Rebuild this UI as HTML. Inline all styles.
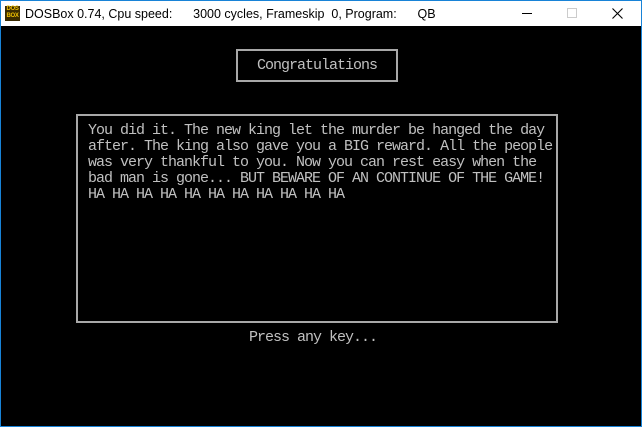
<!DOCTYPE html>
<html><head><meta charset="utf-8"><style>
body{margin:0;width:642px;height:427px;overflow:hidden;background:#000;position:relative;font-family:"Liberation Sans",sans-serif}
.tb{position:absolute;left:0;top:0;width:642px;height:26px;background:#fff;border-top:1px solid #1883d7;box-sizing:border-box}
.bl{position:absolute;left:0;top:0;width:1px;height:427px;background:#1883d7}
.br{position:absolute;right:0;top:0;width:1px;height:427px;background:#1883d7}
.bb{position:absolute;left:0;bottom:0;width:642px;height:1px;background:#1883d7}
.icon{position:absolute;left:5px;top:5px;width:15px;height:15px;background:#3a2a00;color:#f0c000;font:bold 6px/7px "Liberation Sans",sans-serif;text-align:center;letter-spacing:-0.3px}
.title{position:absolute;left:25px;top:6px;font-size:12.5px;color:#000;white-space:pre}
.m{font-family:"Liberation Mono",monospace;font-size:15px;letter-spacing:-1px;color:#c0c0c0;position:absolute;white-space:pre;line-height:16px}
.box{position:absolute;border:2px solid #a8a8a8;box-sizing:border-box}
</style></head><body>
<div class="tb">
<div class="icon">DOS<br>BOX</div>
<div class="title">DOSBox 0.74, Cpu speed:      3000 cycles, Frameskip  0, Program:      QB</div>
<div style="position:absolute;left:522px;top:12px;width:10px;height:1px;background:#000"></div>
<div style="position:absolute;left:567px;top:7px;width:10px;height:10px;border:1px solid #ccc;box-sizing:border-box"></div>
<svg style="position:absolute;left:612px;top:7px" width="11" height="11"><path d="M0.5 0.5L10.5 10.5M10.5 0.5L0.5 10.5" stroke="#000" stroke-width="1.1"/></svg>
</div>
<div class="box" style="left:236px;top:49px;width:162px;height:33px"></div>
<div class="m" style="left:257px;top:58px">Congratulations</div>
<div class="box" style="left:76px;top:114px;width:482px;height:209px"></div>
<div class="m" style="left:88px;top:123px">You did it. The new king let the murder be hanged the day
after. The king also gave you a BIG reward. All the people
was very thankful to you. Now you can rest easy when the
bad man is gone... BUT BEWARE OF AN CONTINUE OF THE GAME!
HA HA HA HA HA HA HA HA HA HA HA</div>
<div class="m" style="left:249px;top:330px">Press any key...</div>
<div class="bl"></div><div class="br"></div><div class="bb"></div>
</body></html>
